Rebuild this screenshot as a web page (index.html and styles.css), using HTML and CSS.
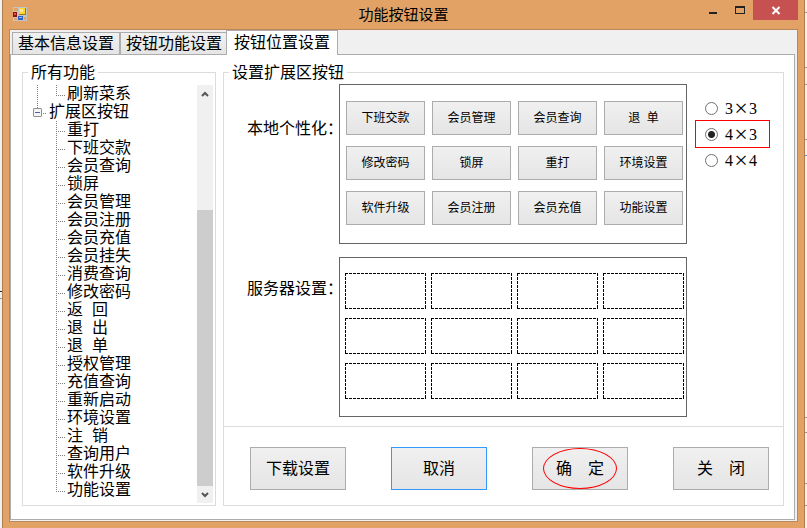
FILE: index.html
```html
<!DOCTYPE html>
<html lang="zh-CN">
<head>
    <meta charset="UTF-8">
    <meta name="viewport" content="width=device-width, initial-scale=1.0">
    <title>功能按钮设置</title>
    <link rel="stylesheet" href="styles.css">
</head>
<body>
    <div class="window">
        <header class="title-bar">
            <svg class="app-icon" width="14" height="14" viewBox="0 0 14 14" shape-rendering="crispEdges">
                <rect width="14" height="14" fill="#c4c4c4"/>
                <path d="M1 1h4v3H1zM1 11h3v2H1zM11 10h2v3h-2z" fill="#e2a266"/>
                <rect x="6" y="1" width="7" height="7" fill="#a87a10"/>
                <rect x="6" y="1" width="6" height="6" fill="#ffd42a"/>
                <rect x="7" y="2" width="3" height="3" fill="#ffe98a"/>
                <rect x="0" y="5" width="4" height="5" fill="#8c1414"/>
                <rect x="1" y="6" width="2" height="2" fill="#e8503c"/>
                <rect x="5" y="9" width="5" height="4" fill="#2c62c8"/>
                <rect x="6" y="10" width="3" height="1" fill="#8ab8f8"/>
            </svg>
            <h1>功能按钮设置</h1>
            <div class="window-controls">
                <button type="button" class="control" aria-label="最小化">
                    <svg width="10" height="20" viewBox="0 0 10 20" shape-rendering="crispEdges"><path d="M1 12h8v2H1z" fill="#222"/></svg>
                </button>
                <button type="button" class="control" aria-label="最大化">
                    <svg width="10" height="20" viewBox="0 0 10 20" shape-rendering="crispEdges"><path d="M0 6h10v8H0zM1 8v5h8V8z" fill="#222" fill-rule="evenodd"/></svg>
                </button>
                <button type="button" class="control close" aria-label="关闭">
                    <svg width="10" height="20" viewBox="0 0 10 20"><path d="M1.5 7l7 7M8.5 7l-7 7" stroke="#fff" stroke-width="2"/></svg>
                </button>
            </div>
        </header>

        <main class="client">
            <div class="tabs" role="tablist">
                <button type="button" class="tab" role="tab">基本信息设置</button>
                <button type="button" class="tab" role="tab">按钮功能设置</button>
                <button type="button" class="tab active" role="tab" aria-selected="true">按钮位置设置</button>
            </div>

            <form class="panel">
                <fieldset class="group functions">
                    <legend>所有功能</legend>
                    <div class="tree-box">
                        <ul class="tree">
                            <li class="first">刷新菜系</li>
                            <li class="parent"><button type="button" class="expander" aria-label="折叠"></button>扩展区按钮</li>
                            <li>重打</li>
                            <li>下班交款</li>
                            <li>会员查询</li>
                            <li>锁屏</li>
                            <li>会员管理</li>
                            <li>会员注册</li>
                            <li>会员充值</li>
                            <li>会员挂失</li>
                            <li>消费查询</li>
                            <li>修改密码</li>
                            <li>返&nbsp;&nbsp;回</li>
                            <li>退&nbsp;&nbsp;出</li>
                            <li>退&nbsp;&nbsp;单</li>
                            <li>授权管理</li>
                            <li>充值查询</li>
                            <li>重新启动</li>
                            <li>环境设置</li>
                            <li>注&nbsp;&nbsp;销</li>
                            <li>查询用户</li>
                            <li>软件升级</li>
                            <li class="last">功能设置</li>
                        </ul>
                        <div class="scrollbar">
                            <button type="button" class="arrow" aria-label="向上">
                                <svg width="8" height="6" viewBox="0 0 8 6"><path d="M1 5l3-3 3 3" fill="none" stroke="#555" stroke-width="2"/></svg>
                            </button>
                            <div class="thumb"></div>
                            <button type="button" class="arrow" aria-label="向下">
                                <svg width="8" height="6" viewBox="0 0 8 6"><path d="M1 1l3 3 3-3" fill="none" stroke="#555" stroke-width="2"/></svg>
                            </button>
                        </div>
                    </div>
                </fieldset>

                <fieldset class="group extension">
                    <legend>设置扩展区按钮</legend>
                    <div class="settings">
                        <span class="caption">本地个性化：</span>
                        <div class="board local">
                            <button type="button">下班交款</button>
                            <button type="button">会员管理</button>
                            <button type="button">会员查询</button>
                            <button type="button">退&nbsp;&nbsp;单</button>
                            <button type="button">修改密码</button>
                            <button type="button">锁屏</button>
                            <button type="button">重打</button>
                            <button type="button">环境设置</button>
                            <button type="button">软件升级</button>
                            <button type="button">会员注册</button>
                            <button type="button">会员充值</button>
                            <button type="button">功能设置</button>
                        </div>
                        <div class="sizes">
                            <label><input type="radio" name="size"><span>3<i>×</i>3</span></label>
                            <label class="marked"><input type="radio" name="size" checked><span>4<i>×</i>3</span></label>
                            <label><input type="radio" name="size"><span>4<i>×</i>4</span></label>
                        </div>

                        <span class="caption">服务器设置：</span>
                        <div class="board server">
                            <div class="slot"></div><div class="slot"></div><div class="slot"></div><div class="slot"></div>
                            <div class="slot"></div><div class="slot"></div><div class="slot"></div><div class="slot"></div>
                            <div class="slot"></div><div class="slot"></div><div class="slot"></div><div class="slot"></div>
                        </div>
                    </div>

                    <div class="actions">
                        <button type="button">下载设置</button>
                        <button type="button" class="focused">取消</button>
                        <button type="button" class="circled">确　定</button>
                        <button type="button">关　闭</button>
                    </div>
                </fieldset>
            </form>
        </main>
    </div>
</body>
</html>
```

FILE: styles.css
```css
* {
    box-sizing: border-box;
}

/* slivers of the window behind show at both sides */
body {
    margin: 0;
    background:
        linear-gradient(#222, #222) 0 291px / 2px 1px no-repeat,
        linear-gradient(#999, #999) 0 298px / 2px 1px no-repeat,
        linear-gradient(#999, #999) 100% 12px / 2px 1px no-repeat,
        linear-gradient(#999, #999) 100% 67px / 2px 1px no-repeat,
        linear-gradient(#999, #999) 100% 84px / 2px 1px no-repeat,
        linear-gradient(#999, #999) 100% 139px / 2px 1px no-repeat,
        linear-gradient(#3399ff, #3399ff) 100% 155px / 2px 1px no-repeat,
        linear-gradient(#999, #999) 100% 417px / 2px 1px no-repeat,
        linear-gradient(#999, #999) 100% 432px / 2px 1px no-repeat,
        linear-gradient(#999, #999) 100% 483px / 2px 1px no-repeat,
        linear-gradient(#999, #999) 100% 505px / 2px 1px no-repeat,
        #f0f0f0;
    color: #000;
    font-family: "Liberation Sans", "Noto Sans CJK SC", sans-serif;
    font-size: 16px;
    line-height: 18px;
}

button {
    padding: 0;
    border: 1px solid #acacac;
    background: linear-gradient(#f0f0f0, #e5e5e5);
    color: inherit;
    font: inherit;
    white-space: nowrap;
}

.window {
    display: flex;
    flex-direction: column;
    min-height: 100vh;
    margin: 0 2px;
    padding: 0 6px 6px;
    border: solid #b07e4e;
    border-width: 0 1px;
    background: #e2a266;
}

/* Title bar */
.title-bar {
    display: grid;
    grid-template-columns: 1fr auto 1fr;
    height: 29px;
}

.app-icon {
    margin: 7px 4px;
}

.title-bar h1 {
    margin: 0;
    font-size: 15px;
    font-weight: normal;
    line-height: 30px;
}

.window-controls {
    display: flex;
    justify-content: flex-end;
}

.control {
    display: flex;
    justify-content: center;
    width: 27px;
    height: 20px;
    border: 0;
    background: none;
}

.control.close {
    width: 45px;
    background: #c75050;
}

/* Tabs */
.client {
    display: flex;
    flex: 1;
    flex-direction: column;
    padding-bottom: 1px;
    padding-right: 2px;
    border: 1px solid #b9875a;
    background: #f0f0f0;
}

.tabs {
    display: flex;
    align-items: flex-end;
    height: 24px;
    padding-left: 2px;
}

.tab {
    width: 108px;
    height: 22px;
    border-bottom: 0;
    line-height: 20px;
}

.tab.active {
    position: relative;
    width: 112px;
    height: 25px;
    margin: 0 0 -1px -2px;
    background: #fff;
}

.panel {
    display: flex;
    flex: 1;
    gap: 7px;
    padding: 8px 10px 13px 11px;
    border: 1px solid #acacac;
    background: #fff;
}

.group {
    min-width: 0;
    margin: 0;
    padding: 0;
    border: 1px solid #dcdcdc;
}

.group legend {
    margin-left: 5px;
    padding: 0 3px;
    line-height: 19px;
}

/* Function tree */
.functions {
    flex: 0 0 194px;
}

.tree-box {
    display: flex;
    padding: 3px 2px 2px 0;
}

.tree {
    flex: 1;
    margin: 0;
    padding: 0 0 4px;
    list-style: none;
}

.tree li {
    height: 18px;
    padding-left: 44px;
    background:
        repeating-linear-gradient(#808080 0 1px, transparent 1px 2px) 33px 0 / 1px 18px no-repeat,
        repeating-linear-gradient(90deg, #808080 0 1px, transparent 1px 2px) 33px 10px / 10px 1px no-repeat;
    white-space: nowrap;
}

.tree .first {
    background:
        repeating-linear-gradient(#808080 0 1px, transparent 1px 2px) 14px 0 / 1px 18px no-repeat,
        repeating-linear-gradient(#808080 0 1px, transparent 1px 2px) 33px 0 / 1px 11px no-repeat,
        repeating-linear-gradient(90deg, #808080 0 1px, transparent 1px 2px) 33px 10px / 10px 1px no-repeat;
}

.tree .last {
    background-size: 1px 11px, 10px 1px;
}

.tree .parent {
    display: flex;
    align-items: center;
    gap: 7px;
    padding-left: 10px;
    background:
        repeating-linear-gradient(#808080 0 1px, transparent 1px 2px) 14px 0 / 1px 6px no-repeat,
        repeating-linear-gradient(90deg, #808080 0 1px, transparent 1px 2px) 20px 10px / 4px 1px no-repeat;
}

.expander {
    width: 9px;
    height: 9px;
    border-color: #919191;
    border-radius: 1px;
    background: linear-gradient(#4b63a7, #4b63a7) center / 5px 1px no-repeat, #f4f4f4;
}

.scrollbar {
    display: flex;
    flex-direction: column;
    width: 16px;
    background: #f0f0f0;
}

.arrow {
    display: flex;
    align-items: center;
    justify-content: center;
    height: 17px;
    border: 0;
    background: none;
}

.thumb {
    height: 276px;
    margin-top: auto;
    background: #cdcdcd;
}

/* Extension area */
.extension {
    flex: 1;
}

.settings {
    display: grid;
    grid-template-columns: 92px 348px 1fr;
    row-gap: 13px;
    padding: 2px 13px 9px 23px;
}

.caption {
    padding-top: 36px;
    white-space: nowrap;
}

.server {
    grid-column: 2;
}

.settings .caption:nth-of-type(2) {
    padding-top: 23px;
}

.board {
    display: grid;
    grid-template-columns: repeat(4, 1fr);
    height: 160px;
    border: 1px solid #646464;
}

.local {
    grid-auto-rows: 34px;
    gap: 11px 7px;
    padding: 16px 3px 0 6px;
}

.local button {
    font-size: 12px;
}

.server {
    grid-auto-rows: 36px;
    gap: 9px 5px;
    padding: 15px 2px 0 5px;
}

.slot {
    background:
        repeating-linear-gradient(90deg, #000 0 3px, transparent 3px 4px) top / 100% 1px no-repeat,
        repeating-linear-gradient(90deg, #000 0 3px, transparent 3px 4px) bottom / 100% 1px no-repeat,
        repeating-linear-gradient(#000 0 3px, transparent 3px 4px) left / 1px 100% no-repeat,
        repeating-linear-gradient(#000 0 3px, transparent 3px 4px) right / 1px 100% no-repeat;
}

.sizes {
    padding: 11px 0 0 9px;
}

.sizes label {
    display: flex;
    align-items: center;
    gap: 7px;
    width: 73px;
    height: 26px;
    padding-left: 9px;
    font-family: "Liberation Serif", serif;
}

.sizes input {
    width: 13px;
    height: 13px;
    margin: 0;
    border: 1px solid #707070;
    border-radius: 50%;
    background: #fff;
    appearance: none;
}

.sizes input:checked {
    background: radial-gradient(circle, #222 3px, #fff 4px);
}

.sizes i {
    display: inline-block;
    width: 16px;
    font-size: 24px;
    font-style: normal;
    text-align: center;
    vertical-align: -2px;
}

.marked {
    outline: 1px solid #f00;
}

/* Bottom buttons */
.actions {
    display: flex;
    justify-content: space-between;
    padding: 20px 14px 15px 26px;
    border-top: 1px solid #dcdcdc;
}

.actions button {
    width: 96px;
    height: 43px;
}

.actions .focused {
    border-color: #3399ff;
}

.circled {
    position: relative;
}

.circled::after {
    content: "";
    position: absolute;
    inset: 0 10px 0 10px;
    border: 1px solid #f00;
    border-radius: 50%;
}
```
